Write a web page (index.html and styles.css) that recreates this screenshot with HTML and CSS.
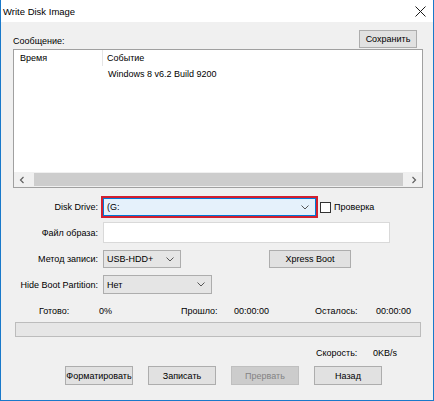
FILE: index.html
```html
<!DOCTYPE html>
<html>
<head>
<meta charset="utf-8">
<link rel="stylesheet" href="styles.css">
</head>
<body>
<div class="window">
  <div class="titlebar">
    <span class="title">Write Disk Image</span>
    <svg class="close" width="11" height="11" viewBox="0 0 11 11"><path d="M0.5 0.5 L10.5 10.5 M10.5 0.5 L0.5 10.5" stroke="#1a1a1a" stroke-width="1" fill="none"/></svg>
  </div>
  <div class="client">
    <div class="msg-head">
      <span class="msg-label">Сообщение:</span>
      <button class="btn save">Сохранить</button>
    </div>
    <div class="list">
      <div class="list-body">
        <div class="list-header">
          <span class="col1">Время</span>
          <span class="col2">Событие</span>
        </div>
        <div class="list-row">
          <span class="col1"></span>
          <span class="col2 plain">Windows 8 v6.2 Build 9200</span>
        </div>
      </div>
      <div class="hscroll">
        <svg class="arrow" width="6" height="8" viewBox="0 0 6 8"><path d="M4.5 1 L1.5 4 L4.5 7" stroke="#606060" stroke-width="1.2" fill="none"/></svg>
        <div class="thumb"></div>
        <svg class="arrow" width="6" height="8" viewBox="0 0 6 8"><path d="M1.5 1 L4.5 4 L1.5 7" stroke="#606060" stroke-width="1.2" fill="none"/></svg>
      </div>
    </div>

    <div class="row drive-row">
      <span class="label">Disk Drive:</span>
      <div class="drive-hl">
        <div class="combo combo-focus">
          <span>(G:</span>
          <svg width="8" height="5" viewBox="0 0 8 5"><path d="M0.5 0.5 L4 4 L7.5 0.5" stroke="#555" stroke-width="1" fill="none"/></svg>
        </div>
      </div>
      <span class="checkbox"></span>
      <span class="check-label">Проверка</span>
    </div>

    <div class="row file-row">
      <span class="label">Файл образа:</span>
      <div class="file-input"></div>
    </div>

    <div class="row method-row">
      <span class="label">Метод записи:</span>
      <div class="combo combo-method">
        <span>USB-HDD+</span>
        <svg width="8" height="5" viewBox="0 0 8 5"><path d="M0.5 0.5 L4 4 L7.5 0.5" stroke="#555" stroke-width="1" fill="none"/></svg>
      </div>
      <button class="btn xpress">Xpress Boot</button>
    </div>

    <div class="row hide-row">
      <span class="label">Hide Boot Partition:</span>
      <div class="combo combo-hide">
        <span>Нет</span>
        <svg width="8" height="5" viewBox="0 0 8 5"><path d="M0.5 0.5 L4 4 L7.5 0.5" stroke="#555" stroke-width="1" fill="none"/></svg>
      </div>
    </div>

    <div class="stats">
      <span class="s1">Готово:</span>
      <span class="s2">0%</span>
      <span class="s3">Прошло:</span>
      <span class="s4">00:00:00</span>
      <span class="s5">Осталось:</span>
      <span class="s6">00:00:00</span>
    </div>

    <div class="progress"></div>

    <div class="speed">
      <span class="sp1">Скорость:</span>
      <span>0KB/s</span>
    </div>

    <div class="buttons">
      <button class="btn action">Форматировать</button>
      <button class="btn action">Записать</button>
      <button class="btn action disabled">Прервать</button>
      <button class="btn action">Назад</button>
    </div>
  </div>
</div>
</body>
</html>
```

FILE: styles.css
```css
html, body {
  margin: 0;
  padding: 0;
  background: #f0f0f0;
}
.window {
  width: 434px;
  height: 401px;
  box-sizing: border-box;
  border: 1px solid #1979ca;
  border-top: none;
  background: #f0f0f0;
  display: flex;
  flex-direction: column;
  font-family: "Liberation Sans", Arial, sans-serif;
  font-size: 9px;
  color: #000;
}
.titlebar {
  height: 22px;
  background: #fff;
  display: flex;
  align-items: center;
  justify-content: space-between;
  padding: 0 7px 0 2px;
}
.title {
  font-size: 9.5px;
  color: #000;
  padding-top: 1px;
}
.close {
  display: block;
}
.client {
  display: flex;
  flex-direction: column;
  padding: 0 10px 0 12px;
}
.msg-head {
  margin-top: 8px;
  height: 18px;
  display: flex;
  justify-content: space-between;
  align-items: flex-end;
}
.msg-label {
  line-height: 12px;
  padding-bottom: 1px;
}
.btn {
  font-family: "Liberation Sans", Arial, sans-serif;
  font-size: 9px;
  color: #000;
  background: #e1e1e1;
  border: 1px solid #adadad;
  padding: 0;
  margin: 0;
  box-sizing: border-box;
}
.save {
  width: 58px;
  height: 18px;
  margin-right: 6px;
}
.list {
  margin-top: 1px;
  height: 139px;
  box-sizing: border-box;
  border: 1px solid #a0a0a0;
  background: #fff;
  display: flex;
  flex-direction: column;
}
.list-body {
  flex: 1;
}
.list-header {
  display: flex;
  height: 16px;
  align-items: center;
}
.list-header .col1 {
  border-right: 1px solid #e5e5e5;
  height: 16px;
  line-height: 16px;
}
.col1 {
  width: 89px;
  padding-left: 6px;
  box-sizing: border-box;
  flex-shrink: 0;
}
.col2 {
  padding-left: 4px;
}
.list-row {
  display: flex;
  height: 16px;
  align-items: center;
}
.list-row .col2 {
  padding-left: 5px;
}
.hscroll {
  height: 15px;
  background: #f0f0f0;
  display: flex;
  align-items: center;
  padding: 0 5px;
}
.thumb {
  flex: 1;
  height: 13px;
  background: #cdcdcd;
  margin: 0 8px 0 9px;
}
.arrow {
  display: block;
}
.row {
  display: flex;
  align-items: center;
}
.label {
  width: 85px;
  text-align: right;
  flex-shrink: 0;
}
.drive-row {
  margin-top: 8px;
  height: 22px;
}
.drive-hl {
  margin-left: 3px;
  width: 217px;
  height: 22px;
  box-sizing: border-box;
  border: 2px solid #d2202f;
  display: flex;
}
.combo {
  display: flex;
  align-items: center;
  justify-content: space-between;
  box-sizing: border-box;
  padding: 0 6px 0 3px;
}
.combo-focus {
  flex: 1;
  background: #e5f1fb;
  border: 1px solid #0078d7;
}
.checkbox {
  width: 11px;
  height: 11px;
  box-sizing: border-box;
  border: 1px solid #333;
  background: #fff;
  margin-left: 2px;
}
.check-label {
  margin-left: 3px;
}
.file-row {
  margin-top: 4px;
  height: 21px;
}
.file-input {
  margin-left: 5px;
  width: 287px;
  height: 21px;
  box-sizing: border-box;
  border: 1px solid #d9d9d9;
  background: #fff;
}
.method-row {
  margin-top: 7px;
  height: 18px;
}
.combo-method {
  margin-left: 5px;
  width: 78px;
  height: 18px;
  background: #e5e5e5;
  border: 1px solid #adadad;
}
.xpress {
  margin-left: 88px;
  width: 82px;
  height: 18px;
}
.hide-row {
  margin-top: 7px;
  height: 19px;
}
.combo-hide {
  margin-left: 5px;
  width: 109px;
  height: 19px;
  background: #e5e5e5;
  border: 1px solid #adadad;
}
.stats {
  margin-top: 11px;
  height: 12px;
  line-height: 12px;
  display: flex;
  padding-left: 26px;
}
.s1 { width: 60px; }
.s2 { width: 82px; }
.s3 { width: 53px; }
.s4 { width: 81px; }
.s5 { width: 61px; }
.progress {
  margin-top: 5px;
  margin-left: 2px;
  width: 406px;
  height: 15px;
  box-sizing: border-box;
  border: 1px solid #bcbcbc;
  background: #e6e6e6;
}
.speed {
  margin-top: 10px;
  height: 12px;
  line-height: 12px;
  display: flex;
  padding-left: 303px;
}
.sp1 { width: 57px; }
.buttons {
  margin-top: 7px;
  display: flex;
  padding-left: 52px;
  gap: 15px;
}
.action {
  width: 68px;
  height: 19px;
}
.disabled {
  background: #cccccc;
  border-color: #bfbfbf;
  color: #838383;
}
```
